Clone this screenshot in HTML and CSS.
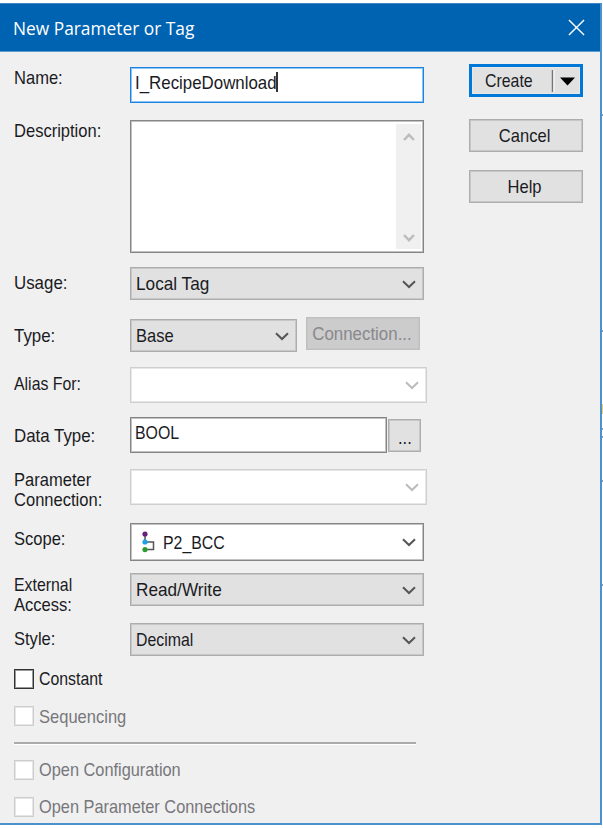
FILE: index.html
```html
<!DOCTYPE html>
<html lang="en">
<head>
<meta charset="utf-8">
<title>New Parameter or Tag</title>
<link rel="stylesheet" href="styles.css">
</head>
<body>
<svg width="0" height="0" class="defs">
  <symbol id="chev" viewBox="0 0 14 9"><path d="M1 1.2 7 7 13 1.2" fill="none" stroke="currentColor" stroke-width="2"/></symbol>
</svg>
<div class="window">
<div class="dialog">
  <header class="titlebar">
    <h1><span class="title-text">New Parameter or Tag</span></h1>
    <svg class="close" viewBox="0 0 18 18"><path d="M1 1 17 17M17 1 1 17" stroke="#fff" stroke-width="1.5"/></svg>
  </header>
  <main class="content">
    <section class="form">
      <div class="row name"><label><span class="t">Name:</span></label><div class="input focus"><span class="t wide">I_RecipeDownload</span><i class="caret"></i></div></div>
      <div class="row desc"><label><span class="t">Description:</span></label>
        <div class="input area"><div class="scroll">
          <svg viewBox="0 0 12 10"><path d="M1 8 6 2.8 11 8" fill="none" stroke="#bcbcbc" stroke-width="2.5"/></svg>
          <svg viewBox="0 0 12 10"><path d="M1 2 6 7.2 11 2" fill="none" stroke="#bcbcbc" stroke-width="2.5"/></svg>
        </div></div></div>
      <div class="row usage"><label><span class="t wide">Usage:</span></label><div class="select"><span class="t wider">Local Tag</span><svg><use href="#chev"/></svg></div></div>
      <div class="row type"><label><span class="t wide">Type:</span></label><div class="select short"><span class="t">Base</span><svg><use href="#chev"/></svg></div><div class="button disabled"><span class="t wide">Connection...</span></div></div>
      <div class="row alias"><label><span class="t narrow">Alias For:</span></label><div class="select blank"><svg><use href="#chev"/></svg></div></div>
      <div class="row data"><label><span class="t wide">Data Type:</span></label><div class="input medium"><span class="t narrow">BOOL</span></div><div class="button browse"><span class="t">...</span></div></div>
      <div class="row param"><label><span class="t">Parameter<br>Connection:</span></label><div class="select blank"><svg><use href="#chev"/></svg></div></div>
      <div class="row scope"><label><span class="t">Scope:</span></label><div class="select white">
        <svg class="program" viewBox="0 0 13 22"><path d="M3 3V11M3 11H11.5V18.5H3" fill="none" stroke="#555" stroke-width="1.5"/><circle cx="3" cy="3" r="2.6" fill="#68217a"/><circle cx="3" cy="11" r="2.6" fill="#1ba1e8"/><circle cx="3" cy="18.6" r="2.6" fill="#2a9a2e"/></svg>
        <span class="t narrow">P2_BCC</span><svg><use href="#chev"/></svg></div></div>
      <div class="row external"><label><span class="t narrow">External</span><br><span class="t">Access:</span></label><div class="select"><span class="t wider">Read/Write</span><svg><use href="#chev"/></svg></div></div>
      <div class="row style"><label><span class="t">Style:</span></label><div class="select"><span class="t narrow">Decimal</span><svg><use href="#chev"/></svg></div></div>
      <div class="check on"><i></i><span class="t narrow">Constant</span></div>
      <div class="check seq"><i></i><span class="t">Sequencing</span></div>
      <hr>
      <div class="check"><i></i><span class="t less">Open Configuration</span></div>
      <div class="check"><i></i><span class="t less">Open Parameter Connections</span></div>
    </section>
    <aside class="actions">
      <div class="button create"><span class="t narrow">Create</span><svg viewBox="0 0 26 24"><path d="M1.5 1V23" stroke="#777" stroke-width="1.5"/><path d="M3 1V23" stroke="#fff"/><path d="M9 8.5H24L16.5 16.5Z" fill="#000"/></svg></div>
      <div class="button cancel"><span class="t">Cancel</span></div>
      <div class="button help"><span class="t">Help</span></div>
    </aside>
  </main>
</div>
<div class="behind"><i class="m1"></i><i class="m2"></i><i class="m3"></i><i class="m4"></i><i class="m5"></i><i class="m6"></i><i class="m7"></i></div>
</div>
</body>
</html>
```
FILE: styles.css
```css
* { box-sizing: border-box; }
body {
  margin: 0;
  height: 828px;
  overflow: hidden;
  background: #fff;
  font: 19px/20px "Liberation Sans", Arial, sans-serif;
  color: #1b1b1f;
}
.defs { display: block; }
.window { display: flex; padding-top: 3px; }
.dialog {
  width: 602px;
  height: 822px;
  background: #f0f0f0;
  border-right: 2px solid #4a92cd;
  border-bottom: 2px solid #4a92cd;
}
.titlebar {
  display: flex;
  justify-content: space-between;
  align-items: center;
  height: 49px;
  padding: 0 15px 0 13px;
  background: #0063b1;
  border-top: 1px solid #3b86c3;
  border-bottom: 1px solid #5b9bd0;
  color: #fff;
}
h1 { margin: 0; font: 19px/24px "Open Sans", "Noto Sans", sans-serif; }
.title-text { display: inline-block; transform: scaleX(.912); transform-origin: left; white-space: nowrap; }
.close { width: 17px; height: 17px; margin-bottom: 1px; }
.content { display: flex; justify-content: space-between; padding: 0 17px 0 14px; }
.form { width: 414px; padding-top: 15px; }
.t { display: inline-block; transform: scaleX(.87); transform-origin: left; white-space: nowrap; }
.t.narrow { transform: scaleX(.835); }
.t.less { transform: scaleX(.86); }
.t.wide { transform: scaleX(.888); }
.t.wider { transform: scaleX(.905); }
.row { display: flex; align-items: flex-start; }
.row label { width: 116px; flex: none; }
.input, .select, .button, .check i {
  --edge: #858585;
  --fill: #fff;
  border: 1px solid var(--edge);
  background: var(--fill);
  box-shadow: inset 0 0 0 1px color-mix(in srgb, var(--edge) 50%, var(--fill));
}
.input, .select { width: 294px; flex: none; display: flex; }
.input { height: 36px; padding: 5px 4px; }
.focus { --edge: #1a84e2; position: relative; }
.caret { position: absolute; left: 145px; top: 4px; width: 2px; height: 20px; background: #333; }
.select { --edge: #adadad; --fill: #e1e1e1; height: 33px; align-items: center; padding: 2px 7px 1px 5px; }
.select > svg:last-child { width: 14px; height: 9px; margin-left: auto; color: #555; flex: none; }
.select.blank { --edge: #cfcfcf; --fill: #fff; width: 297px; height: 36px; }
.blank > svg:last-child { color: #bcbcbc; }
.select.white { --edge: #858585; --fill: #fff; height: 38px; }
.short { width: 167px; }
.medium { width: 257px; }
.program { width: 13px; height: 22px; margin: 0 8px 2px 6px; flex: none; }
.area { height: 133px; padding: 3px 2px; justify-content: flex-end; }
.scroll { width: 25px; background: #f0f0f0; display: flex; flex-direction: column; align-items: center; justify-content: space-between; padding: 8px 0 6px; }
.scroll svg { width: 12px; height: 10px; }

.name label { padding-top: 1px; }
.desc { margin-top: 17px; }
.desc label { padding-top: 1px; }
.usage { margin-top: 14px; }
.usage label { padding-top: 6px; }
.type { margin-top: 17px; height: 35px; }
.type .select { margin-top: 2px; }
.type label { padding-top: 9px; }
.alias { margin-top: 15px; }
.alias label { padding-top: 7px; }
.data { margin-top: 14px; }
.data label { padding-top: 9px; }
.param { margin-top: 16px; height: 36px; }
.param label { padding-top: 1px; }
.scope { margin-top: 18px; }
.scope label { padding-top: 6px; }
.external { margin-top: 12px; height: 33px; }
.external label { padding-top: 2px; }
.style { margin-top: 17px; }
.style label { padding-top: 6px; }

.button { --edge: #adadad; --fill: #e1e1e1; display: flex; align-items: center; justify-content: center; width: 114px; height: 33px; padding: 1px 2px 0 0; }
.button .t { transform-origin: center; }
.button.disabled { --edge: #bfbfbf; --fill: #ccc; margin-left: 9px; color: #88888c; flex: none; }
.button.browse { width: 33px; margin: 2px 0 0 1px; padding: 4px 0 0; }
.actions { width: 114px; padding-top: 12px; flex: none; }
.button.create { border: 3px solid #0078d7; justify-content: flex-start; padding: 0 3px 0 13px; box-shadow: inset 0 0 0 1px #e8e8e8; }
.button.create .t { transform-origin: left; }
.create svg { width: 26px; height: 24px; margin-left: auto; flex: none; }
.cancel { margin-top: 22px; }
.help { margin-top: 18px; }

.check { display: flex; align-items: center; height: 20px; margin-top: 17px; color: #77777b; }
.check i { --edge: #cdcdcd; width: 20px; height: 20px; margin-right: 5px; flex: none; }
.check.on { margin-top: 13px; color: #1b1b1f; }
.check.on i { --edge: #333; }
.seq .t { margin-top: 2px; }
hr { width: 402px; height: 3px; margin: 16px 0 -2px; border: 0; border-top: 2px solid #ababab; border-bottom: 1px solid #fff; }

.behind { position: relative; width: 1px; height: 822px; background: #fff; }
.behind i { position: absolute; width: 1px; height: 2px; background: #8ba3b8; }
.behind .m1 { top: 111px; }
.behind .m2 { top: 327px; }
.behind .m3 { top: 401px; height: 10px; background: #e8d370; }
.behind .m4 { top: 425px; }
.behind .m5 { top: 433px; }
.behind .m6 { top: 477px; }
.behind .m7 { top: 581px; }
```
